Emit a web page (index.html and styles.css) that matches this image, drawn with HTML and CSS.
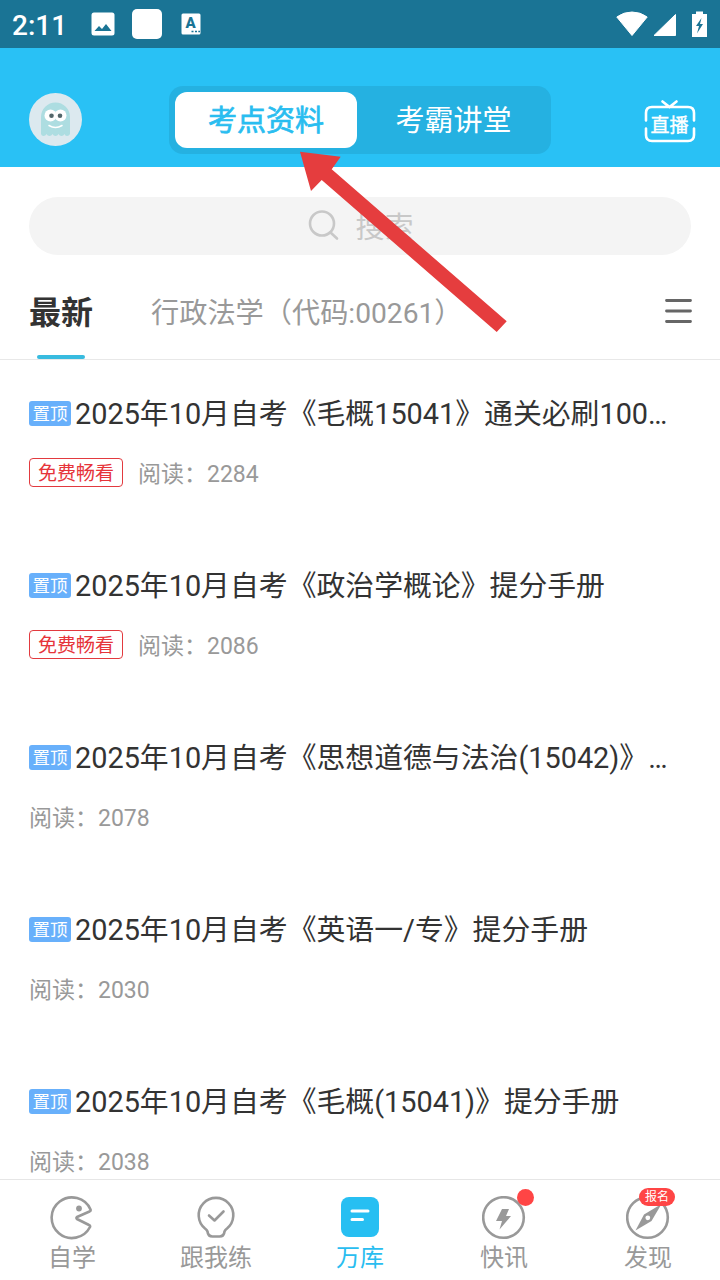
FILE: index.html
```html
<!DOCTYPE html>
<html lang="zh-CN">
<head>
    <meta charset="UTF-8">
    <meta name="viewport" content="width=device-width, initial-scale=1.0">
    <title>万库</title>
    <link rel="stylesheet" href="styles.css">
</head>
<body>
    <div class="status-bar">
        <span class="time">2:11</span>
        <svg class="st-picture" width="24" height="24" viewBox="0 0 24 24">
            <rect x="0.5" y="0.5" width="23" height="23" rx="2.5" fill="#fff"/>
            <path d="M3.5 19 L8 14 L11 17 L15 12 L20.5 19 Z" fill="#1a7495"/>
        </svg>
        <span class="st-square"></span>
        <svg class="st-letter" width="20" height="22" viewBox="0 0 20 22">
            <rect x="0.5" y="0.5" width="19" height="21" rx="1.5" fill="#fff"/>
            <text x="9.5" y="15" text-anchor="middle" class="letter">A</text>
            <path d="M10.5 18.5h2M14 18.5h2M17.3 18.5h1.7" stroke="#1a7495" stroke-width="1.5"/>
        </svg>
        <div class="status-right">
            <svg width="32" height="26" viewBox="0 0 32 26">
                <path d="M16 24.5 L0.8 6 Q7.5 1 16 1 T31.2 6 Z" fill="#fff" stroke="#fff" stroke-linejoin="round"/>
            </svg>
            <svg class="st-signal" width="24" height="24" viewBox="0 0 24 24">
                <path d="M22.5 1.5 V22.500 H1 Z" fill="#fff" stroke="#fff" stroke-linejoin="round"/>
            </svg>
            <svg class="st-battery" width="15" height="27" viewBox="0 0 15 27">
                <path d="M4 0.500h7v2.500h4V26H0V3h4z" fill="#fff"/>
                <path d="M9.500 7 L4 15 H7 L5 22.500 L11 13 H8 Z" fill="#1a7495"/>
            </svg>
        </div>
    </div>

    <header class="header">
        <svg class="avatar" width="54" height="54" viewBox="0 0 54 54">
            <circle cx="27.500" cy="26.500" r="26.500" fill="#dce9ef"/>
            <path d="M13 41V24a14.500 14.500 0 0 1 29 0v17q-1 2-3 2-2 0-2.500-2-1 2-3 2t-3-2q-1 2-3 2t-3-2q-1 2-3 2t-3-2q-1 2-3 2t-2.500-2z" fill="#addde1"/>
            <circle cx="22.500" cy="22.500" r="6" fill="#fff"/>
            <circle cx="32.500" cy="22.500" r="6" fill="#fff"/>
            <circle cx="23.500" cy="22.800" r="2.300" fill="#53676b"/>
            <circle cx="32" cy="22.800" r="2.300" fill="#53676b"/>
            <path d="M21 32.500q6.500 4 13 0" fill="none" stroke="#fff" stroke-width="1.500" stroke-linecap="round"/>
        </svg>
        <div class="switch">
            <span class="switch-item active">考点资料</span>
            <span class="switch-item">考霸讲堂</span>
        </div>
        <svg class="live" width="52" height="44" viewBox="0 0 52 44">
            <path d="M2 20.500V13q0-6 6-6h36q6 0 6 6v7.500M2 28.500V35q0 6 6 6h36q6 0 6-6v-6.500M18.500 1.500l7 5.500 7-5.500" fill="none" stroke="#fff" stroke-width="2.600" stroke-linecap="round"/>
            <text x="25.500" y="31.500" text-anchor="middle" class="live-text">直播</text>
        </svg>
    </header>

    <div class="search">
        <svg width="32" height="32" viewBox="0 0 32 32">
            <circle cx="14" cy="14.500" r="12" fill="none" stroke="#c8c8c8" stroke-width="2.600"/>
            <path d="M22.500 23.500l6.500 6" stroke="#c8c8c8" stroke-width="2.600" stroke-linecap="round"/>
        </svg>
        <span>搜索</span>
    </div>

    <div class="tabs">
        <span class="tab current">最新</span>
        <span class="tab">行政法学（代码:00261）</span>
        <svg class="menu" width="28" height="26" viewBox="0 0 28 26">
            <path d="M2.500 2.500h24M2.500 13h24M2.500 23.500h24" stroke="#666" stroke-width="2.800" stroke-linecap="round"/>
        </svg>
    </div>

    <main class="list">
        <div class="item">
            <div class="title"><span class="top">置顶</span>2025年10月自考《毛概15041》通关必刷100…</div>
            <div class="meta"><span class="free">免费畅看</span>阅读：2284</div>
        </div>
        <div class="item">
            <div class="title"><span class="top">置顶</span>2025年10月自考《政治学概论》提分手册</div>
            <div class="meta"><span class="free">免费畅看</span>阅读：2086</div>
        </div>
        <div class="item">
            <div class="title"><span class="top">置顶</span>2025年10月自考《思想道德与法治(15042)》…</div>
            <div class="meta">阅读：2078</div>
        </div>
        <div class="item">
            <div class="title"><span class="top">置顶</span>2025年10月自考《英语一/专》提分手册</div>
            <div class="meta">阅读：2030</div>
        </div>
        <div class="item">
            <div class="title"><span class="top">置顶</span>2025年10月自考《毛概(15041)》提分手册</div>
            <div class="meta">阅读：2038</div>
        </div>
    </main>

    <nav class="nav">
        <div class="nav-item">
            <svg width="44" height="44" viewBox="0 0 44 44" fill="none" stroke="#999" stroke-width="2.600" stroke-linejoin="round">
                <path d="M40.500 13.500A20.300 20.300 0 1 0 40 31Q40.500 29.500 39 29L27 23Q26 22 27 21L39.500 15.500Q41 15 40.500 13.500Z"/>
                <circle cx="29" cy="12.500" r="2.900" fill="#999" stroke="none"/>
            </svg>
            <span>自学</span>
        </div>
        <div class="nav-item">
            <svg width="44" height="44" viewBox="0 0 44 44" fill="none" stroke="#999" stroke-width="2.600" stroke-linecap="round" stroke-linejoin="round">
                <path d="M13.500 35.500Q13 34 11 32.500A17.300 17.300 0 1 1 33 32.500Q31 34 30.500 35.500Q30 40.500 25.500 40.500H18.500Q14 40.500 13.500 35.500Z"/>
                <path d="M15 19.500l5.500 5 9-9"/>
            </svg>
            <span>跟我练</span>
        </div>
        <div class="nav-item on">
            <svg width="44" height="44" viewBox="0 0 44 44">
                <rect x="3" y="1" width="38" height="40" rx="8" fill="#27bff2"/>
                <path d="M14 15h16M14 23.500h10.500" stroke="#fff" stroke-width="3" stroke-linecap="round"/>
            </svg>
            <span>万库</span>
        </div>
        <div class="nav-item">
            <svg width="44" height="44" viewBox="0 0 44 44">
                <circle cx="21.500" cy="21.500" r="20.300" fill="none" stroke="#999" stroke-width="2.600"/>
                <path d="M20 13h7l-3 7h5L17.500 33.500 20 25h-6z" fill="#999"/>
            </svg>
            <span>快讯</span>
            <i class="dot"></i>
        </div>
        <div class="nav-item">
            <svg width="44" height="44" viewBox="0 0 44 44">
                <circle cx="21.500" cy="21.500" r="20.300" fill="none" stroke="#999" stroke-width="2.600"/>
                <path d="M35.500 8L25.500 25 9.500 34.500 18 18.500z" fill="#999"/>
                <circle cx="21.800" cy="21.800" r="2.400" fill="#fff"/>
            </svg>
            <span>发现</span>
            <b class="badge">报名</b>
        </div>
    </nav>

    <svg class="arrow" width="208" height="182" viewBox="0 0 208 182">
        <path d="M0 0.700L40.700 5.700 31.700 18.300 206.700 170.300 196.700 181 21.700 29 11 40z" fill="#e53d3e"/>
    </svg>
</body>
</html>
```
FILE: styles.css
```css
* {
    box-sizing: border-box;
}
body {
    margin: 0;
    width: 720px;
    height: 1280px;
    display: flex;
    flex-direction: column;
    position: relative;
    overflow: hidden;
    background: #fff;
    color: #333;
    font-family: Roboto, "Noto Sans CJK SC", sans-serif;
}
svg {
    display: block;
    flex: none;
}
.status-bar {
    height: 48px;
    flex: none;
    display: flex;
    align-items: center;
    padding: 0 13px 0 12px;
    background: #1a7495;
    color: #fff;
}
.time {
    width: 79px;
    font-size: 28px;
    font-weight: 500;
    padding-top: 2px;
}
.st-square {
    width: 30px;
    height: 30px;
    margin: 0 19px 0 17px;
    border-radius: 5px;
    background: #fff;
}
.letter {
    font-size: 15px;
    font-weight: 900;
    fill: #1a7495;
}
.status-right {
    display: flex;
    align-items: center;
    margin-left: auto;
}
.st-signal {
    margin: 2px 15px 0 5px;
}
.header {
    height: 119px;
    flex: none;
    display: flex;
    align-items: center;
    padding: 25px 24px 0 28px;
    background: #29c1f5;
}
.switch {
    display: flex;
    width: 382px;
    height: 68px;
    margin-left: 87px;
    padding: 6px;
    border-radius: 14px;
    background: #25b1e1;
}
.switch-item {
    flex: 1;
    height: 56px;
    padding-left: 5px;
    line-height: 59px;
    font-size: 29px;
    text-align: center;
    color: #fff;
}
.switch-item.active {
    flex: none;
    width: 182px;
    padding-left: 0;
    border-radius: 12px;
    background: #fff;
    color: #29bdf0;
    -webkit-text-stroke: 0.7px #29bdf0;
}
.live {
    margin: 4px 0 0 auto;
}
.live-text {
    font-size: 19px;
    fill: #fff;
    stroke: #fff;
    stroke-width: 0.4px;
}
.search {
    height: 58px;
    flex: none;
    margin: 30px 29px 0;
    padding: 0 0 3px 2px;
    display: flex;
    align-items: center;
    justify-content: center;
    gap: 15px;
    border-radius: 29px;
    background: #f4f4f4;
    color: #c8c8c8;
    font-size: 29px;
}
.tabs {
    height: 105px;
    flex: none;
    display: flex;
    padding: 0 28px 0 29px;
    border-bottom: 1px solid #e8e8e8;
}
.tab {
    line-height: 117px;
    font-size: 28.2px;
    color: #999;
}
.tab.current {
    position: relative;
    width: 64px;
    margin-right: 58px;
    font-size: 32px;
    font-weight: 700;
    color: #333;
}
.tab.current::after {
    content: "";
    position: absolute;
    left: 8px;
    bottom: 0;
    width: 48px;
    height: 4px;
    border-radius: 2px;
    background: #38bbdf;
}
.menu {
    margin: 43px 0 0 auto;
}
.list {
    flex: 1;
    min-height: 0;
    overflow: hidden;
}
.item {
    height: 172px;
    padding: 30px 29px 0;
}
.title {
    display: flex;
    align-items: center;
    height: 42px;
    font-size: 28.85px;
    white-space: nowrap;
}
.top {
    width: 42px;
    height: 25px;
    line-height: 27px;
    margin: 4px 4px 0 0;
    border-radius: 3px;
    background: #68b0fb;
    color: #fff;
    font-size: 17.5px;
    text-align: center;
}
.meta {
    display: flex;
    align-items: center;
    height: 29px;
    margin-top: 25px;
    font-size: 23px;
    color: #999;
}
.free {
    width: 94px;
    height: 29px;
    line-height: 29px;
    margin: 2px 15px 0 0;
    border: 1px solid #e23a3f;
    border-radius: 4px;
    color: #e6343a;
    font-size: 19px;
    text-align: center;
}
.nav {
    height: 101px;
    flex: none;
    display: flex;
    border-top: 1px solid #e6e6e6;
    background: #fff;
}
.nav-item {
    flex: 1;
    position: relative;
    display: flex;
    flex-direction: column;
    align-items: center;
    padding-top: 16px;
    font-size: 24px;
    line-height: 37px;
    color: #999;
}
.nav-item.on {
    color: #29bdf0;
}
.dot {
    position: absolute;
    left: 85px;
    top: 9px;
    width: 17px;
    height: 17px;
    border-radius: 50%;
    background: #ff4545;
}
.badge {
    position: absolute;
    left: 63px;
    top: 8px;
    width: 36px;
    height: 18px;
    border-radius: 9px;
    background: #ff4545;
    color: #fff;
    font-size: 12px;
    font-weight: 400;
    line-height: 18px;
    text-align: center;
}
.arrow {
    position: absolute;
    left: 300px;
    top: 151px;
}
```
